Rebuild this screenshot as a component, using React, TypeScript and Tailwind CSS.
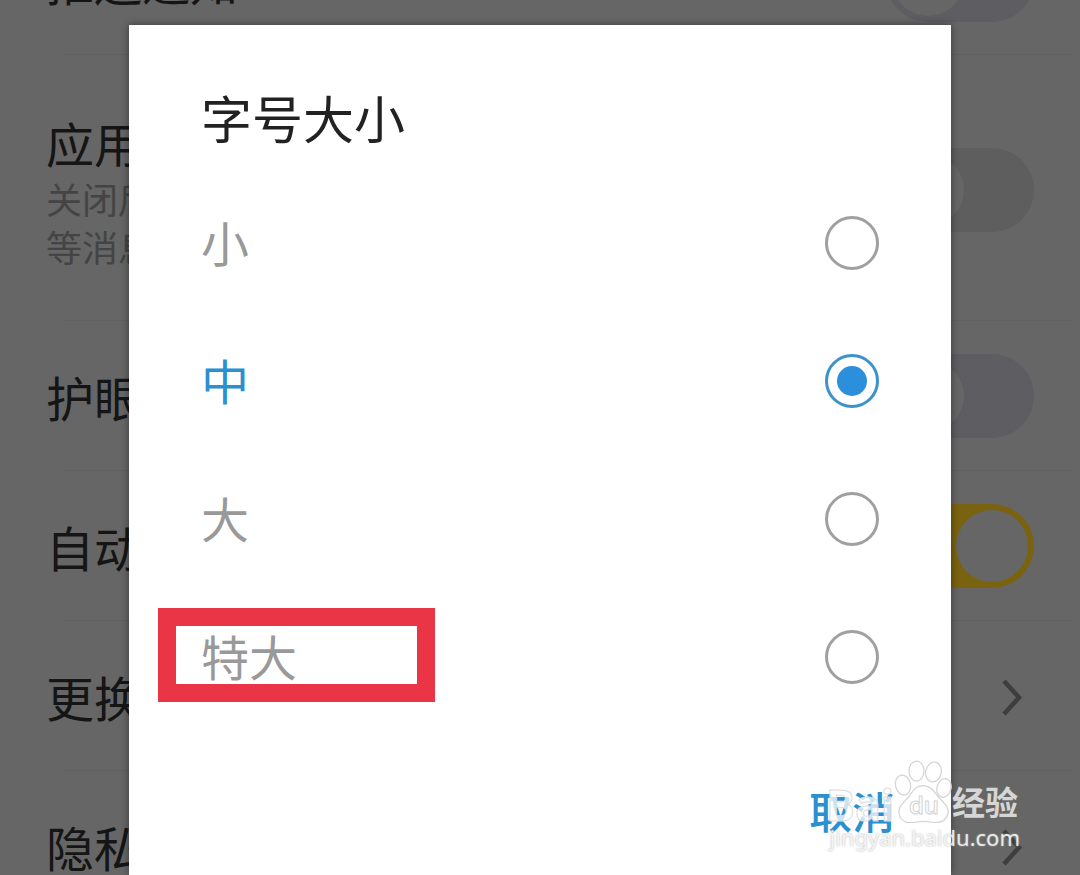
import { useState } from "react";
import type { ReactNode } from "react";

const sizes = ["小", "中", "大", "特大"];

function Row({ children }: { children: ReactNode }) {
  return (
    <li>
      {children}
      <hr className="ml-16 mr-2 border-[#616161]" />
    </li>
  );
}

interface SwitchRowProps {
  title: string;
  lines?: string[];
  on?: boolean;
  tall?: boolean;
  track?: string;
}

function SwitchRow({ title, lines = [], on = false, tall = false, track = "bg-[#5e5d61]" }: SwitchRowProps) {
  return (
    <Row>
      <label className={`flex items-center justify-between px-[46px] ${tall ? "h-[265px] pt-1" : "h-[149px]"}`}>
        <span>
          <span className="block text-[48px] leading-[64px] text-[#151515]">{title}</span>
          {lines.map((line) => (
            <span key={line} className="block text-[36px] leading-[48px] text-[#444]">
              {line}
            </span>
          ))}
        </span>
        <input
          type="checkbox"
          role="switch"
          defaultChecked={on}
          className={`flex h-[84px] w-[148px] shrink-0 appearance-none items-center rounded-full px-[6px] before:size-[72px] before:rounded-full before:bg-[#666] checked:justify-end checked:bg-[#7a6310] ${track}`}
        />
      </label>
    </Row>
  );
}

function LinkRow({ title }: { title: string }) {
  return (
    <Row>
      <a href="#" className="flex h-[149px] items-center justify-between pl-[46px] pr-[56px]">
        <span className="text-[48px] leading-[64px] text-[#151515]">{title}</span>
        <svg className="h-10 w-6" viewBox="0 0 24 40" fill="none" stroke="#3e3e3e" strokeWidth="4.5">
          <path d="M4 5 19 21.500 4 38" />
        </svg>
      </a>
    </Row>
  );
}

function FontSizeDialog() {
  const [size, setSize] = useState("中");

  return (
    <div
      role="dialog"
      aria-labelledby="font-size-title"
      className="flex-1 bg-white pt-[60px] shadow-[0_0_8px_rgba(0,0,0,0.45)]"
    >
      <h2 id="font-size-title" className="px-[72px] text-[51px] leading-[64px] text-[#222]">
        字号大小
      </h2>
      <div className="pt-[25px]">
        {sizes.map((s) => (
          <label key={s} className="relative flex h-[138px] items-center justify-between px-[72px]">
            <span className={`pb-1 text-[48px] leading-[64px] ${s === size ? "text-[#2b90d0]" : "text-[#999]"}`}>{s}</span>
            <input
              type="radio"
              name="font-size"
              checked={s === size}
              onChange={() => setSize(s)}
              className="grid size-[54px] appearance-none place-items-center rounded-full border-[3px] border-[#a0a0a0] before:size-[30px] before:rounded-full checked:border-[#3b92cc] checked:before:bg-[#2b8fdc]"
            />
            {s === "特大" && (
              <span className="pointer-events-none absolute left-[29px] top-5 h-[94px] w-[277px] border-[18px] border-[#ea3546]" />
            )}
          </label>
        ))}
      </div>
      <div className="flex justify-end px-[56px] pt-[52px] pb-10">
        <button type="button" className="text-[43px] font-medium leading-[64px] text-[#2b90d0]">
          取消
        </button>
      </div>
    </div>
  );
}

function Watermark() {
  return (
    <div className="pointer-events-none absolute bottom-[24px] right-[60px] flex flex-col items-end">
      <div className="flex items-end pr-[2px] text-white/75">
        <span className="font-['Open_Sans'] text-[43px] font-bold leading-[36px] [-webkit-text-stroke:1px_#dcdcdc]">
          Bai
        </span>
        <svg className="h-[64px] w-[58px]" viewBox="0 0 58 64" fill="white" fillOpacity="0.75" stroke="#d4d4d4" strokeWidth="1.250">
          <ellipse cx="9" cy="26" rx="7.500" ry="10" transform="rotate(-14 9 26)" />
          <ellipse cx="22.500" cy="12" rx="7.500" ry="10" />
          <ellipse cx="39.500" cy="13" rx="7.800" ry="10" transform="rotate(12 39.500 13)" />
          <ellipse cx="50" cy="29" rx="7" ry="9.500" transform="rotate(15 50 29)" />
          <path d="M29 26.500c-8 0-11 7-14 11-4 5-11 9-10 17 2 10 11 10 18 8.500 5-1 8-1 13 0 8 1.500 16 .5 18-8.500 1-8-6-12-10-17-4-5-7-11-15-11Z" />
          <text
            x="30"
            y="55"
            textAnchor="middle"
            strokeWidth="1"
            className="font-['Open_Sans'] text-[24px] font-semibold"
          >
            du
          </text>
        </svg>
        <span className="pb-1 text-[33px] font-bold leading-[36px] text-[#d6d6d6]">经验</span>
      </div>
      <span className="font-['Noto_Sans'] text-[22px] leading-[28px] text-white/80 [text-shadow:0_0_2px_#aaa]">
        jingyan.baidu.com
      </span>
    </div>
  );
}

export default function App() {
  return (
    <div className="relative h-screen overflow-hidden bg-[#666] font-['Noto_Sans_CJK_SC',sans-serif]">
      <ul className="-mt-[95px]">
        <SwitchRow title="推送通知" />
        <SwitchRow title="应用" lines={["关闭后", "等消息"]} tall track="bg-[#5e5e5e]" />
        <SwitchRow title="护眼" />
        <SwitchRow title="自动" on />
        <LinkRow title="更换" />
        <LinkRow title="隐私" />
      </ul>
      <div className="absolute inset-0 flex px-[129px] pt-[25px]">
        <FontSizeDialog />
      </div>
      <Watermark />
    </div>
  );
}
